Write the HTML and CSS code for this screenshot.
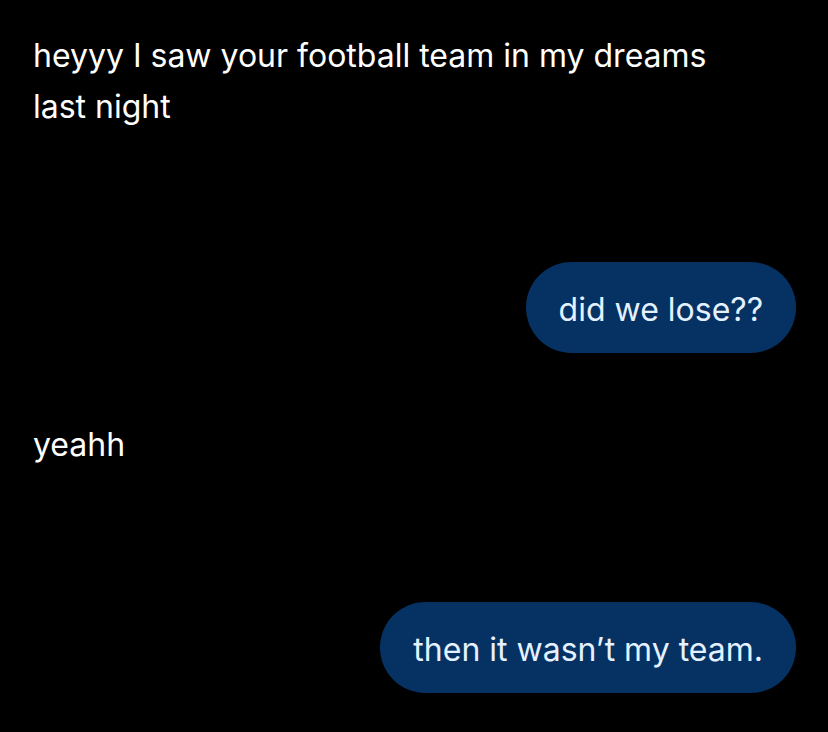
FILE: index.html
```html
<!DOCTYPE html>
<html>
<head>
<meta charset="utf-8">
<link rel="stylesheet" href="styles.css">
</head>
<body>
<div class="chat">
  <div class="msg in first">heyyy I saw your football team in my dreams<br>last night</div>
  <div class="msg out bubble b1">did we lose??</div>
  <div class="msg in second">yeahh</div>
  <div class="msg out bubble b2">then it wasn’t my team.</div>
</div>
</body>
</html>
```
FILE: styles.css
```css
html, body {
  margin: 0;
  padding: 0;
  background: #000;
}
.chat {
  width: 828px;
  height: 732px;
  box-sizing: border-box;
  padding: 30px 33px 0 33px;
  display: flex;
  flex-direction: column;
  font-family: Inter, "Noto Sans", sans-serif;
  font-size: 32px;
  color: #fff;
}
.msg.in {
  align-self: flex-start;
  line-height: 51px;
}
.msg.out {
  align-self: flex-end;
  margin-right: -1px;
}
.bubble {
  background: #063263;
  color: #e4f1ff;
  border-radius: 46px;
  height: 91px;
  display: flex;
  align-items: center;
  padding: 3px 33px 0 33px;
  box-sizing: border-box;
}
.b1 { margin-top: 130px; }
.second { margin-top: 66px; }
.b2 { margin-top: 132px; }
```
